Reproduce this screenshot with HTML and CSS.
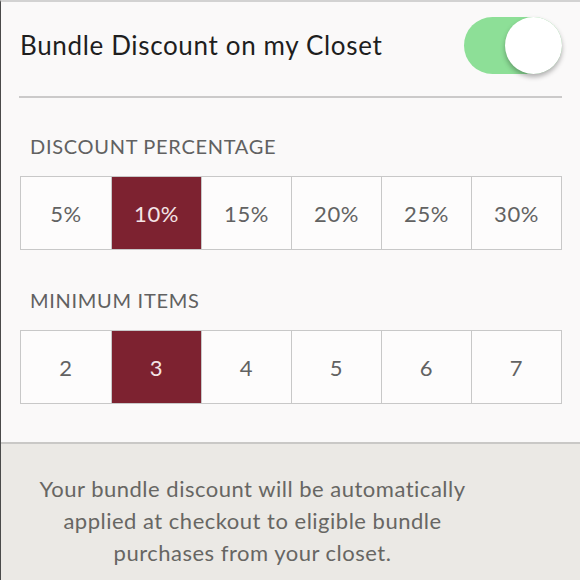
FILE: index.html
```html
<!DOCTYPE html>
<html lang="en">
  <head>
    <meta charset="UTF-8">
    <meta name="viewport" content="width=device-width, initial-scale=1.0">
    <title>Bundle Discount</title>
    <link rel="stylesheet" href="styles.css">
  </head>
  <body>
    <div class="screen">
      <div class="settings">
        <div class="header">
          <h1 class="title">Bundle Discount on my Closet</h1>
          <div class="toggle on"><span class="knob"></span></div>
        </div>

        <h2 class="label">DISCOUNT PERCENTAGE</h2>
        <ul class="options">
          <li>5%</li>
          <li class="selected">10%</li>
          <li>15%</li>
          <li>20%</li>
          <li>25%</li>
          <li>30%</li>
        </ul>

        <h2 class="label">MINIMUM ITEMS</h2>
        <ul class="options">
          <li>2</li>
          <li class="selected">3</li>
          <li>4</li>
          <li>5</li>
          <li>6</li>
          <li>7</li>
        </ul>
      </div>

      <div class="note">
        <p>Your bundle discount will be automatically applied at checkout to eligible bundle purchases from your closet.</p>
      </div>
    </div>
  </body>
</html>
```

FILE: styles.css
```css
* {
  box-sizing: border-box;
  margin: 0;
  padding: 0;
}

html, body {
  height: 100%;
  overflow: hidden;
}

body {
  font-family: Lato, "Open Sans", sans-serif;
  background: #f9f8f8;
}

.screen {
  height: 100%;
  border-left: 1px solid #4a4a4a;
  border-top: 2px solid #d2d2d2;
  display: flex;
  flex-direction: column;
}

.settings {
  background: #faf9f9;
  padding: 0 18px 0 18px;
  height: 440px;
}

.header {
  display: flex;
  align-items: center;
  justify-content: space-between;
  height: 96px;
  border-bottom: 2px solid #cbcaca;
  padding: 0 0 8px 1px;
}

.title {
  font-size: 26px;
  font-weight: normal;
  color: #1e1e1e;
  letter-spacing: .65px;
}

.toggle {
  width: 98px;
  height: 57px;
  border-radius: 29px;
  background: #8ddf97;
  position: relative;
}

.knob {
  position: absolute;
  right: 0;
  top: 0;
  width: 57px;
  height: 57px;
  border-radius: 50%;
  background: #fff;
  box-shadow: 0 3px 5px rgba(0, 0, 0, .3);
}

.label {
  font-size: 20px;
  font-weight: normal;
  color: #616161;
  margin: 36px 0 18px 11px;
  letter-spacing: .7px;
}

.options {
  display: grid;
  grid-template-columns: repeat(6, 1fr);
  list-style: none;
  margin-left: 1px;
  border: 1.5px solid #c8c8c8;
  height: 74px;
  background: #fdfcfc;
}

.options li {
  display: flex;
  align-items: center;
  justify-content: center;
  font-size: 22px;
  letter-spacing: .6px;
  color: #626262;
  border-left: 1.5px solid #c8c8c8;
}

.options li:first-child {
  border-left: none;
}

.options li.selected {
  background: #7d2230;
  color: #f4e4e6;
}

.options + .label {
  margin-top: 38px;
}

.note {
  flex: 1;
  background: #ebe9e5;
  border-top: 2px solid #c9c8c6;
  padding: 29px 110px 0 34px;
}

.note p {
  font-size: 22px;
  line-height: 32px;
  letter-spacing: .5px;
  color: #676663;
  text-align: center;
}
```
